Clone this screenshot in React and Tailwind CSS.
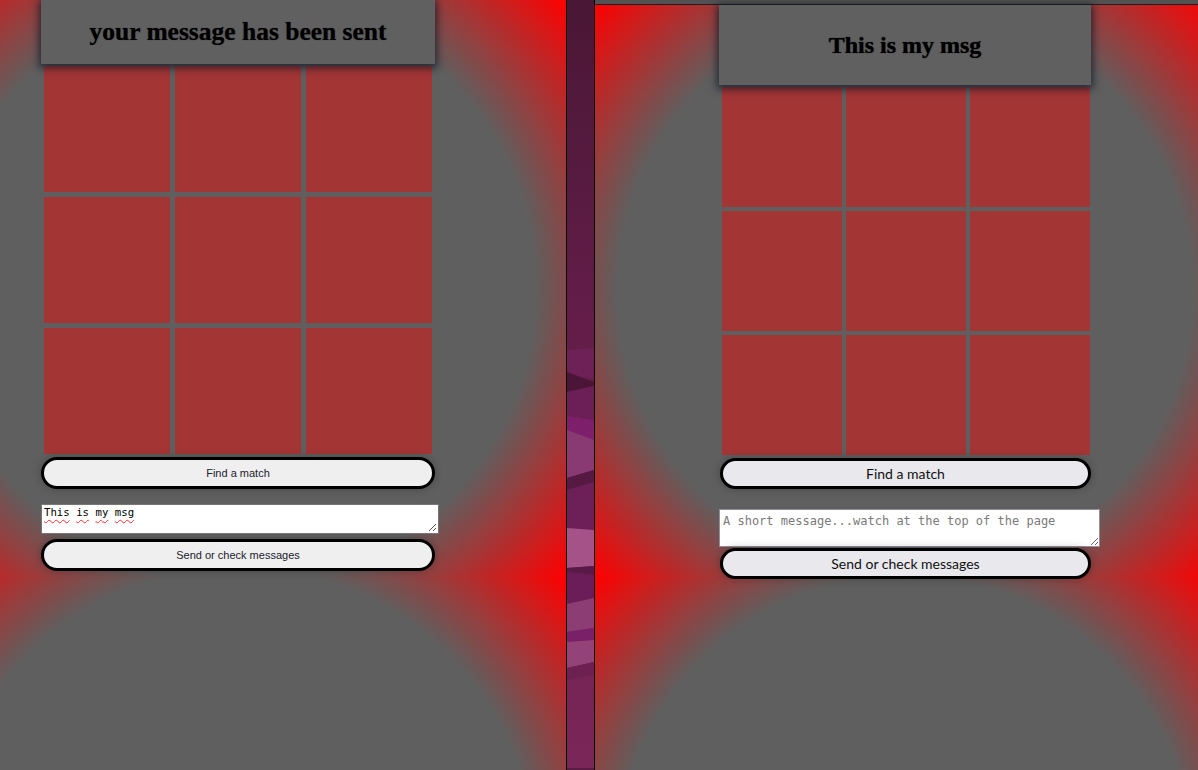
import React from "react";

function Grid({ cell, className }) {
  const cells = Array.from({ length: 9 });
  return (
    <div className={className}>
      {cells.map((_, i) => (
        <div key={i} className={cell} />
      ))}
    </div>
  );
}

function Strip() {
  return (
    <div className="w-[29px] h-[770px] shrink-0 border-x border-black bg-[#5a1b45]">
      <svg width="27" height="768" viewBox="0 0 27 768" className="block">
        <defs>
          <linearGradient id="stripbg" x1="0" y1="0" x2="0" y2="1">
            <stop offset="0" stopColor="#4a1736" />
            <stop offset="0.4" stopColor="#621d48" />
            <stop offset="1" stopColor="#7a2658" />
          </linearGradient>
        </defs>
        <rect x="0" y="0" width="27" height="768" fill="url(#stripbg)" />
        <polygon points="0,350 27,348 27,378 0,376" fill="#6e2156" />
        <polygon points="0,372 27,382 27,386 0,392" fill="#4a1536" />
        <polygon points="0,392 27,386 27,420 0,416" fill="#6c1f56" />
        <polygon points="0,416 27,420 27,440 0,445" fill="#7d1f6a" />
        <polygon points="0,430 27,440 27,470 0,478" fill="#8a3a72" />
        <polygon points="0,478 27,470 27,482 0,490" fill="#561941" />
        <polygon points="0,490 27,482 27,530 0,528" fill="#6d2058" />
        <polygon points="0,528 27,530 27,566 0,568" fill="#a45288" />
        <polygon points="0,568 27,566 27,575 0,572" fill="#5a1a48" />
        <polygon points="0,572 27,575 27,598 0,604" fill="#6a1d58" />
        <polygon points="0,604 27,598 27,628 0,632" fill="#8c3e74" />
        <polygon points="0,632 27,628 27,640 0,642" fill="#7a2068" />
        <polygon points="0,642 27,640 27,662 0,668" fill="#944379" />
        <polygon points="0,668 27,662 27,675 0,680" fill="#6d2052" />
      </svg>
    </div>
  );
}

const squiggle =
  "underline decoration-wavy decoration-red-500 decoration-[1px] underline-offset-[3px]";

export default function App() {
  return (
    <div className="flex w-[1198px] h-[770px] overflow-hidden bg-[#5f5f5f]">
      {/* Left window */}
      <div className="relative w-[566px] h-[770px] shrink-0 overflow-hidden bg-[radial-gradient(circle,#5f5f5f_68%,#ff0000_100%)] bg-[length:656px_577px] bg-[position:-90px_0px] bg-repeat">
        <div className="ml-[41px] w-[394px] flex flex-col">
          <div className="relative z-10 h-16 bg-[#606060] shadow-[0_2px_8px_2px_rgba(15,20,35,0.75)] flex items-center justify-center">
            <h1 className="font-['Liberation_Serif',serif] font-bold text-[25.5px] leading-none text-black [text-shadow:0_0_1px_rgba(0,0,0,0.6)]">
              your message has been sent
            </h1>
          </div>
          <Grid
            className="mt-[2px] ml-[3px] w-[388px] grid grid-cols-3 gap-[5px]"
            cell="h-[126px] bg-[#a33535]"
          />
          <button className="mt-[3px] h-[32px] w-[394px] rounded-full border-[3px] border-black bg-[#efefef] shadow-[0_0_8px_rgba(0,0,0,0.25)] font-['Liberation_Sans',Arial,sans-serif] text-[11px] text-[#22222e]">
            Find a match
          </button>
          <div className="relative mt-[15px] w-[398px] h-[30px] bg-white border border-[#767676] px-[2px] pt-[1px] font-['DejaVu_Sans_Mono',monospace] text-[10.7px] leading-[13px] text-black">
            <span className={squiggle}>This</span>{" "}
            <span className={squiggle}>is</span>{" "}
            <span className={squiggle}>my</span>{" "}
            <span className={squiggle}>msg</span>
            <svg width="9" height="9" viewBox="0 0 9 9" className="absolute right-[1px] bottom-[1px]">
              <line x1="8" y1="1" x2="1" y2="8" stroke="#555" strokeWidth="1" />
              <line x1="8" y1="5" x2="5" y2="8" stroke="#555" strokeWidth="1" />
            </svg>
          </div>
          <button className="mt-[5px] h-[32px] w-[394px] rounded-full border-[3px] border-black bg-[#efefef] shadow-[0_0_8px_rgba(0,0,0,0.25)] font-['Liberation_Sans',Arial,sans-serif] text-[11px] text-[#22222e]">
            Send or check messages
          </button>
        </div>
      </div>

      <Strip />

      {/* Right window */}
      <div className="w-[603px] h-[770px] shrink-0 flex flex-col overflow-hidden">
        <div className="h-[5px] shrink-0 bg-[#525252] border-b border-[#1e1e1e]" />
        <div className="flex-1 bg-[radial-gradient(circle,#5f5f5f_68%,#ff0000_100%)] bg-[length:620px_572px] bg-[position:0px_0px] bg-repeat">
          <div className="ml-[124px] w-[372px] flex flex-col">
            <div className="relative z-10 h-20 bg-[#606060] shadow-[0_2px_8px_2px_rgba(15,20,35,0.75)] flex items-center justify-center">
              <h1 className="font-['Liberation_Serif',serif] font-bold text-[24px] leading-none text-black [text-shadow:0_0_1px_rgba(0,0,0,0.8)]">
                This is my msg
              </h1>
            </div>
            <Grid
              className="mt-[2px] ml-[3px] w-[368px] grid grid-cols-3 gap-[4px]"
              cell="h-[120px] bg-[#a33535]"
            />
            <button className="mt-[3px] ml-[1px] h-[31px] w-[371px] rounded-full border-[3px] border-black bg-[#e9e9ed] shadow-[0_0_8px_rgba(0,0,0,0.25)] font-['Lato',sans-serif] text-[14px] text-[#111]">
              Find a match
            </button>
            <textarea
              readOnly
              placeholder="A short message...watch at the top of the page"
              className="mt-[20px] w-[381px] h-[38px] bg-white border border-[#8f8f9d] px-[3px] pt-[3px] pb-[2px] font-['DejaVu_Sans_Mono',monospace] text-[12px] leading-[16px] text-black placeholder:text-[#7a7a7a] outline-none"
            />
            <button className="mt-[1px] ml-[1px] h-[31px] w-[371px] rounded-full border-[3px] border-black bg-[#e9e9ed] shadow-[0_0_8px_rgba(0,0,0,0.25)] font-['Lato',sans-serif] text-[14px] text-[#111]">
              Send or check messages
            </button>
          </div>
        </div>
      </div>
    </div>
  );
}
